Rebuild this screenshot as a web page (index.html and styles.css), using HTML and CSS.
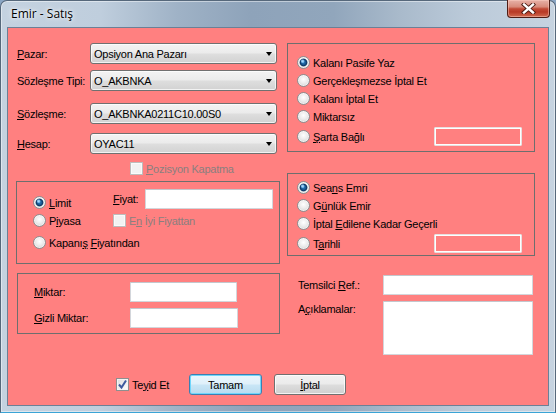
FILE: index.html
```html
<!DOCTYPE html>
<html lang="tr">
<head>
<meta charset="utf-8">
<title>Emir - Satış</title>
<link rel="stylesheet" href="styles.css">
</head>
<body>
<div class="window">
  <div class="titlebar">
    <span class="title">Emir - Satış</span>
    <div class="close">
      <svg width="15" height="11" viewBox="0 0 15 11">
        <path d="M3 1.5 L12 9.5 M12 1.5 L3 9.5" stroke="#4a1a12" stroke-width="4.2" stroke-linecap="square"/>
        <path d="M3 1.5 L12 9.5 M12 1.5 L3 9.5" stroke="#ffffff" stroke-width="2.4" stroke-linecap="square"/>
      </svg>
    </div>
  </div>
  <div class="client">
    <div class="columns">
      <div class="col-left">
        <div class="field-row">
          <span class="field-label"><u>P</u>azar:</span>
          <div class="combo"><span>Opsiyon Ana Pazarı</span><span class="arrow"></span></div>
        </div>
        <div class="field-row gap-a">
          <span class="field-label">Sözleşme Tipi:</span>
          <div class="combo"><span>O_AKBNKA</span><span class="arrow"></span></div>
        </div>
        <div class="field-row gap-b">
          <span class="field-label"><u>S</u>özleşme:</span>
          <div class="combo"><span>O_AKBNKA0211C10.00S0</span><span class="arrow"></span></div>
        </div>
        <div class="field-row gap-c">
          <span class="field-label"><u>H</u>esap:</span>
          <div class="combo"><span>OYAC11</span><span class="arrow"></span></div>
        </div>
        <div class="option pozisyon disabled">
          <span class="check disabled"></span><span><u>P</u>ozisyon Kapatma</span>
        </div>

        <div class="group price-group">
          <div class="price-row">
            <div class="price-type option"><span class="radio on"></span><span><u>L</u>imit</span></div>
            <span class="fiyat-label"><u>F</u>iyat:</span>
            <span class="textbox fiyat-box"></span>
          </div>
          <div class="price-row2">
            <div class="price-type option plain"><span class="radio"></span><span>P<u>i</u>yasa</span></div>
            <div class="option disabled"><span class="check disabled"></span><span>E<u>n</u> İyi Fiyattan</span></div>
          </div>
          <div class="price-row3">
            <div class="option"><span class="radio"></span><span>Kapanı<u>ş</u> <u>F</u>iyatından</span></div>
          </div>
        </div>

        <div class="group qty-group">
          <div class="qty-row">
            <span class="qty-label"><u>M</u>iktar:</span>
            <span class="textbox qty-box"></span>
          </div>
          <div class="qty-row second">
            <span class="qty-label"><u>G</u>izli Miktar:</span>
            <span class="textbox qty-box wide"></span>
          </div>
        </div>
      </div>

      <div class="col-right">
        <div class="group rest-group">
          <div class="option"><span class="radio on"></span><span>Kalanı Pasife Yaz</span></div>
          <div class="option"><span class="radio"></span><span>Gerçekleşmezse İptal Et</span></div>
          <div class="option"><span class="radio"></span><span>Kalanı İptal Et</span></div>
          <div class="option"><span class="radio"></span><span>Miktarsız</span></div>
          <div class="option with-box"><span class="radio"></span><span><u>Ş</u>arta Bağlı</span><span class="textbox small-box"></span></div>
        </div>

        <div class="group time-group">
          <div class="option"><span class="radio on"></span><span>Sea<u>n</u>s Emri</span></div>
          <div class="option"><span class="radio"></span><span>G<u>ü</u>nlük Emir</span></div>
          <div class="option"><span class="radio"></span><span>İptal <u>E</u>dilene Kadar Geçerli</span></div>
          <div class="option with-box"><span class="radio"></span><span>T<u>a</u>rihli</span><span class="textbox small-box"></span></div>
        </div>

        <div class="ref-row">
          <span class="ref-label">Temsilci <u>R</u>ef.:</span>
          <span class="textbox ref-box"></span>
        </div>
        <div class="notes-row">
          <span class="ref-label notes-label">A<u>ç</u>ıklamalar:</span>
          <span class="textbox notes-box"></span>
        </div>
      </div>
    </div>

    <div class="buttons">
      <div class="option confirm">
        <span class="check checked">
          <svg width="11" height="11" viewBox="0 0 11 11"><path d="M2 5.5 L4.5 8.5 L9 1.5" fill="none" stroke="#3d5a9e" stroke-width="2"/></svg>
        </span>
        <span>Te<u>y</u>id Et</span>
      </div>
      <div class="btn default">Tamam</div>
      <div class="btn"><u>İ</u>ptal</div>
    </div>
  </div>
</div>
</body>
</html>
```

FILE: styles.css
```css
* { box-sizing: border-box; }
html, body { margin: 0; padding: 0; }
body {
  width: 556px;
  height: 413px;
  overflow: hidden;
  background: #8aa6c4;
  font-family: "Liberation Sans", Arial, sans-serif;
  font-size: 11px;
  letter-spacing: -0.25px;
  color: #000;
}
u { text-decoration: underline; text-underline-offset: 1px; }

.window {
  width: 556px;
  height: 413px;
  border: 1px solid #56687b;
  border-bottom-color: #3aa4d6;
  border-radius: 7px 7px 0 0;
  background: linear-gradient(90deg, #c4d2e0 0%, #bfcedd 18%, #9fb2c6 32%, #8ea3ba 45%, #91a6bc 60%, #a9bacb 72%, #bccbda 85%, #c6d3e0 100%);
  box-shadow: inset 0 0 0 1px rgba(255,255,255,0.45);
  display: flex;
  flex-direction: column;
}

.titlebar {
  height: 26px;
  flex: none;
  display: flex;
  justify-content: space-between;
  align-items: flex-start;
  padding-left: 10px;
}
.title {
  font-family: "Open Sans", "Noto Sans", sans-serif;
  font-size: 12px;
  letter-spacing: 0;
  line-height: 26px;
  color: #000;
  text-shadow: 0 0 6px #fff, 0 0 3px rgba(255,255,255,0.9);
}
.close {
  width: 43px;
  height: 18px;
  margin-top: -1px;
  margin-right: 5px;
  border: 1px solid #4e1d15;
  border-top: none;
  border-radius: 0 0 4px 4px;
  background: linear-gradient(#e7b2a8 0%, #d88b7b 40%, #c14a36 52%, #b83a26 70%, #d06a50 100%);
  box-shadow: inset 0 0 0 1px rgba(255,210,200,0.45);
  display: flex;
  align-items: center;
  justify-content: center;
}

.client {
  flex: 1;
  margin: 0 6px 6px;
  border: 1px solid #6c8096;
  background: #ff8080;
  padding: 15px 0 0 8px;
  display: flex;
  flex-direction: column;
}

.columns { display: flex; gap: 7px; height: 312px; }
.col-left { width: 264px; display: flex; flex-direction: column; }
.col-right { width: 248px; display: flex; flex-direction: column; }

/* combos */
.field-row { display: flex; align-items: center; height: 21px; }
.gap-a { margin-top: 6px; }
.gap-b { margin-top: 12px; }
.gap-c { margin-top: 9px; }
.field-label { width: 74px; padding-left: 1px; white-space: nowrap; }
.combo {
  width: 187px;
  height: 21px;
  border: 1px solid #707070;
  border-radius: 3px;
  background: linear-gradient(#f3f3f3 0%, #ebebeb 48%, #dedede 52%, #d2d2d2 100%);
  box-shadow: inset 0 0 0 1px rgba(255,255,255,0.7);
  display: flex;
  align-items: center;
  justify-content: space-between;
  padding: 0 4px 0 3px;
}
.arrow {
  width: 0; height: 0;
  border-left: 3.5px solid transparent;
  border-right: 3.5px solid transparent;
  border-top: 4px solid #000;
  margin-top: 1px;
}

/* options */
.option { display: flex; align-items: center; gap: 3px; height: 13px; white-space: nowrap; }
.option.disabled { color: #8a7f7f; }
.pozisyon { margin-top: 8px; padding-left: 114px; }

.radio {
  width: 13px; height: 13px; flex: none;
  border-radius: 50%;
  border: 1px solid #8d8f91;
  background: radial-gradient(circle at 50% 40%, #ffffff 0%, #ececec 45%, #c8c8c8 100%);
  box-shadow: inset 0 0 0 1px rgba(255,255,255,0.55);
}
.radio.on {
  background:
    radial-gradient(circle at 42% 38%, #b5e2ff 0, rgba(150,210,255,0.8) 1.2px, transparent 2.2px),
    radial-gradient(circle at 50% 50%, #2f7fc0 0, #1b5d97 2px, #0c3766 3.3px, #5d7d99 3.8px, transparent 4.3px),
    radial-gradient(circle at 50% 40%, #ffffff 0%, #ececec 45%, #c8c8c8 100%);
}
.check {
  width: 13px; height: 13px; flex: none;
  border: 1px solid #8f8f8f;
  background: linear-gradient(135deg, #dcdcdc 0%, #ffffff 100%);
  box-shadow: inset 0 0 0 1px #f4f4f4;
  display: flex; align-items: center; justify-content: center;
}
.check.disabled { border-color: #bdbdbd; background: #f2f2f2; box-shadow: inset 0 0 0 1px #fafafa; }

.textbox {
  display: block;
  background: #fff;
  border: 1px solid #d3d6db;
  border-top-color: #c3c7cd;
  border-radius: 1px;
}

/* groups */
.group { border: 1px solid #6e6e6e; }

.price-group { margin-top: 6px; height: 83px; padding: 7px 0 0 16px; }
.price-row { display: flex; height: 20px; align-items: center; }
.price-type { width: 80px; }
.price-row .price-type { align-self: flex-start; margin-top: 7px; }
.fiyat-label { width: 32px; }
.fiyat-box { width: 128px; height: 20px; }
.price-row2 { display: flex; margin-top: 5px; height: 13px; }
.price-row3 { margin-top: 9px; }

.qty-group { margin-top: 9px; margin-left: 1px; height: 61px; padding: 8px 0 0 16px; }
.qty-row { display: flex; align-items: center; height: 20px; }
.qty-row.second { margin-top: 6px; }
.qty-label { width: 96px; }
.qty-box { width: 107px; height: 20px; }
.qty-box.wide { width: 108px; }

.rest-group { height: 109px; padding: 12px 12px 0 9px; display: flex; flex-direction: column; gap: 5px; }
.time-group { margin-top: 21px; height: 83px; padding: 7px 12px 0 9px; display: flex; flex-direction: column; gap: 5px; }
.option.with-box { height: 19px; margin-top: -1px; }
.small-box {
  width: 88px; height: 19px; margin-left: auto;
  background: transparent;
  border: 1px solid #e6e0e0;
  box-shadow: inset 0 0 0 1px #ffffff;
}

.ref-row { display: flex; align-items: center; height: 20px; margin-top: 19px; }
.ref-label { width: 96px; padding-left: 11px; white-space: nowrap; }
.ref-box { width: 150px; height: 20px; }
.notes-row { display: flex; align-items: flex-start; margin-top: 6px; }
.notes-label { padding-top: 2px; }
.notes-box { width: 150px; height: 54px; }

/* buttons */
.buttons { display: flex; align-items: center; height: 21px; margin-top: 19px; padding-left: 100px; }
.confirm { width: 73px; }
.btn {
  height: 21px;
  width: 72px;
  border: 1px solid #707070;
  border-radius: 3px;
  background: linear-gradient(#f2f2f2 0%, #ebebeb 48%, #dddddd 52%, #cfcfcf 100%);
  box-shadow: inset 0 0 0 1px rgba(255,255,255,0.75);
  display: flex; align-items: center; justify-content: center;
  margin-left: 12px;
}
.btn.default {
  width: 73px;
  margin-left: 0;
  border-color: #3c7fb1;
  background: linear-gradient(#eaf6fd 0%, #dff0fa 48%, #c9e6f6 52%, #b8dbef 100%);
  box-shadow: inset 0 0 0 1px #6fd6fb;
}
```
